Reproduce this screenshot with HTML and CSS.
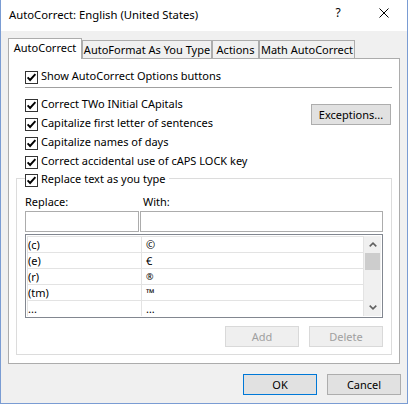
FILE: index.html
```html
<!DOCTYPE html>
<html>
<head>
<meta charset="utf-8">
<title>AutoCorrect</title>
<link rel="stylesheet" href="styles.css">
</head>
<body>
<div class="window">
  <div class="titlebar">
    <span class="title">AutoCorrect: English (United States)</span>
    <span class="capbtn help">?</span>
    <span class="capbtn close"><svg width="10" height="10" viewBox="0 0 10 10"><path d="M0.5 0.5 L9.5 9.5 M9.5 0.5 L0.5 9.5" stroke="#000" stroke-width="1" fill="none"/></svg></span>
  </div>
  <div class="client">
    <div class="tabs">
      <div class="tab active t1">AutoCorrect</div>
      <div class="tab t2">AutoFormat As You Type</div>
      <div class="tab t3">Actions</div>
      <div class="tab t4">Math AutoCorrect</div>
    </div>
    <div class="panel">
      <label class="check indent"><svg viewBox="0 0 13 13"><rect x="0.5" y="0.5" width="12" height="12" fill="#fff" stroke="#333"/><polyline points="2.6,6.4 5.1,9 10.4,3.2" fill="none" stroke="#000" stroke-width="1.9"/></svg><span>Show AutoCorrect Options buttons</span></label>
      <div class="sep"></div>
      <div class="opts">
        <div class="optlist indent">
          <label class="check"><svg viewBox="0 0 13 13"><rect x="0.5" y="0.5" width="12" height="12" fill="#fff" stroke="#333"/><polyline points="2.6,6.4 5.1,9 10.4,3.2" fill="none" stroke="#000" stroke-width="1.9"/></svg><span>Correct TWo INitial CApitals</span></label>
          <label class="check"><svg viewBox="0 0 13 13"><rect x="0.5" y="0.5" width="12" height="12" fill="#fff" stroke="#333"/><polyline points="2.6,6.4 5.1,9 10.4,3.2" fill="none" stroke="#000" stroke-width="1.9"/></svg><span>Capitalize first letter of sentences</span></label>
          <label class="check"><svg viewBox="0 0 13 13"><rect x="0.5" y="0.5" width="12" height="12" fill="#fff" stroke="#333"/><polyline points="2.6,6.4 5.1,9 10.4,3.2" fill="none" stroke="#000" stroke-width="1.9"/></svg><span>Capitalize names of days</span></label>
          <label class="check"><svg viewBox="0 0 13 13"><rect x="0.5" y="0.5" width="12" height="12" fill="#fff" stroke="#333"/><polyline points="2.6,6.4 5.1,9 10.4,3.2" fill="none" stroke="#000" stroke-width="1.9"/></svg><span>Correct accidental use of cAPS LOCK key</span></label>
        </div>
        <button class="btn exceptions">Exceptions...</button>
      </div>
      <fieldset class="group">
        <legend><label class="check lg"><svg viewBox="0 0 13 13"><rect x="0.5" y="0.5" width="12" height="12" fill="#fff" stroke="#333"/><polyline points="2.6,6.4 5.1,9 10.4,3.2" fill="none" stroke="#000" stroke-width="1.9"/></svg><span>Replace text as you type</span></label></legend>
        <div class="labels"><span class="l1">Replace:</span><span>With:</span></div>
        <div class="inputs"><div class="input w1"></div><div class="input w2"></div></div>
        <div class="list">
          <div class="rows">
            <div class="row"><span class="c1">(c)</span><span class="c2">©</span></div>
            <div class="row"><span class="c1">(e)</span><span class="c2">€</span></div>
            <div class="row"><span class="c1">(r)</span><span class="c2 reg">®</span></div>
            <div class="row"><span class="c1">(tm)</span><span class="c2">™</span></div>
            <div class="row"><span class="c1">...</span><span class="c2">…</span></div>
          </div>
          <div class="sb">
            <div class="sb-btn"><svg width="8" height="5" viewBox="0 0 8 5"><polyline points="0.7,4.3 4,1.2 7.3,4.3" fill="none" stroke="#606060" stroke-width="1.6"/></svg></div>
            <div class="sb-thumb"></div>
            <div class="sb-track"></div>
            <div class="sb-btn"><svg width="8" height="5" viewBox="0 0 8 5"><polyline points="0.7,0.7 4,3.8 7.3,0.7" fill="none" stroke="#606060" stroke-width="1.6"/></svg></div>
          </div>
        </div>
        <div class="actions">
          <button class="btn" disabled>Add</button>
          <button class="btn" disabled>Delete</button>
        </div>
      </fieldset>
    </div>
    <div class="footer">
      <button class="btn default">OK</button>
      <button class="btn">Cancel</button>
    </div>
  </div>
</div>
</body>
</html>
```

FILE: styles.css
```css
* { box-sizing: border-box; }
html, body { margin: 0; padding: 0; }
body {
  font-family: "Noto Sans", "Open Sans", sans-serif;
  font-size: 11px;
  color: #000;
  background: #fff;
}
.window {
  width: 408px;
  height: 404px;
  border: 1px solid #7a9cd3;
  border-top: 0;
  background: #f0f0f0;
  display: flex;
  flex-direction: column;
}
.titlebar {
  flex: none;
  height: 31px;
  background: #fff;
  display: flex;
  align-items: flex-start;
}
.title {
  flex: 1;
  padding: 7px 0 0 8px;
  line-height: 16px;
  font-size: 11.3px;
}
.capbtn {
  width: 46px;
  height: 25px;
  display: flex;
  align-items: center;
  justify-content: center;
}
.help {
  font-size: 12px;
  line-height: 16px;
}
.close svg { display: block; margin-top: 1px; }
.client {
  padding: 7px 6px 0 7px;
}
.tabs {
  display: flex;
  align-items: flex-end;
  height: 21px;
  position: relative;
  z-index: 1;
}
.tab {
  height: 18px;
  margin-bottom: 1px;
  border: 1px solid #acacac;
  border-bottom: 0;
  background: #f0f0f0;
  text-align: center;
  padding-top: 1px;
  line-height: 16px;
  white-space: nowrap;
}
.tab.active {
  height: 21px;
  margin-bottom: 0;
  background: #fff;
}
.t1 { width: 74px; }
.t2 { width: 130px; }
.t3 { width: 47px; }
.t4 { width: 96px; }
.panel {
  width: 392px;
  margin-top: -1px;
  background: #fff;
  border: 1px solid #acacac;
  padding: 9px 7px 8px 7px;
}
.indent { margin-left: 9px; }
.check {
  display: flex;
  align-items: flex-start;
  height: 19px;
}
.check svg {
  flex: none;
  width: 13px;
  height: 13px;
  margin-top: 3px;
  display: block;
}
.check span {
  margin-left: 3px;
  line-height: 16px;
  white-space: nowrap;
}
.sep {
  margin-left: 9px;
  height: 1px;
  background: #a0a0a0;
}
.opts {
  display: flex;
  justify-content: space-between;
  align-items: flex-start;
  margin-top: 8px;
}
.btn {
  width: 74px;
  height: 21px;
  padding: 0;
  border: 1px solid #adadad;
  background: #e1e1e1;
  font: inherit;
  color: #000;
  line-height: 16px;
  display: flex;
  align-items: center;
  justify-content: center;
}
.btn:disabled {
  background: #efefef;
  border-color: #d9d9d9;
  color: #a0a0a0;
}
.btn.default { border-color: #0078d7; }
.exceptions {
  width: 80px;
  margin-top: 8px;
  margin-right: 1px;
}
.group {
  margin: -1px 0 0 0;
  width: 376px;
  min-width: 0;
  padding: 8px 8px 7px 8px;
  border: 1px solid #dcdcdc;
}
.group legend {
  padding: 0 3px 0 0;
  margin: 0;
}
.check.lg { height: 15px; }
.labels {
  display: flex;
  height: 16px;
  line-height: 16px;
}
.l1 { width: 118px; }
.inputs {
  display: flex;
  gap: 1px;
  margin-top: 1px;
}
.input {
  height: 21px;
  border: 1px solid #acacac;
  background: #fff;
}
.w1 { width: 114px; }
.w2 { width: 243px; }
.list {
  margin-top: 2px;
  height: 84px;
  border: 1px solid #828790;
  padding: 1px;
  display: flex;
  background: #fff;
}
.rows {
  flex: 1;
  display: flex;
  flex-direction: column;
}
.row {
  display: flex;
  height: 16px;
  border-top: 1px solid #e3e3e3;
  line-height: 15px;
}
.c1 {
  width: 115px;
  border-left: 1px solid #e3e3e3;
  border-right: 1px solid #e3e3e3;
}
.c2 {
  flex: 1;
  padding-left: 4px;
  border-right: 1px solid #e3e3e3;
}
.reg { font-size: 9px; }
.sb {
  width: 17px;
  background: #f0f0f0;
  display: flex;
  flex-direction: column;
}
.sb-btn {
  height: 17px;
  display: flex;
  align-items: center;
  justify-content: center;
}
.sb-btn svg { display: block; }
.sb-thumb {
  height: 17px;
  margin: 0 1px;
  background: #cdcdcd;
}
.sb-track { flex: 1; }
.actions {
  display: flex;
  justify-content: flex-end;
  gap: 10px;
  margin-top: 8px;
}
.footer {
  display: flex;
  justify-content: flex-end;
  gap: 10px;
  margin-top: 10px;
}
```
